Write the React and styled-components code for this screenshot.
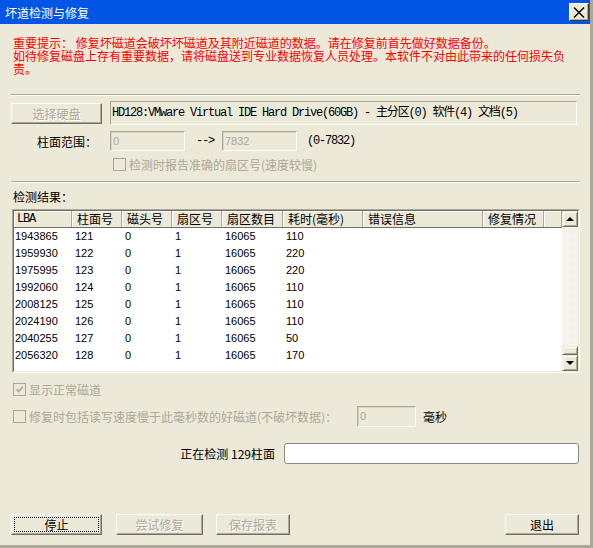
import React from 'react'
import styled, { createGlobalStyle, css } from 'styled-components'

const GlobalStyle = createGlobalStyle`
    html, body {
        margin: 0;
        padding: 0;
        background: #ECE9D8;
    }
    body {
        font-family: "Noto Sans CJK SC", "Liberation Sans", sans-serif;
        font-size: 12px;
        color: #000;
    }
`;

const COLUMNS = '58px 50px 50px 50px 61px 80px 120px 61px 1fr';

const headers = ['LBA', '柱面号', '磁头号', '扇区号', '扇区数目', '耗时(毫秒)', '错误信息', '修复情况', '']

const rows = [
    ['1943865', '121', '0', '1', '16065', '110'],
    ['1959930', '122', '0', '1', '16065', '220'],
    ['1975995', '123', '0', '1', '16065', '220'],
    ['1992060', '124', '0', '1', '16065', '110'],
    ['2008125', '125', '0', '1', '16065', '110'],
    ['2024190', '126', '0', '1', '16065', '110'],
    ['2040255', '127', '0', '1', '16065', '50'],
    ['2056320', '128', '0', '1', '16065', '170'],
]

function App() {
    return (
        <>
            <GlobalStyle />
            <Window>
                <TitleBar>
                    <span>坏道检测与修复</span>
                    <CloseButton>
                        <svg width="12" height="11" viewBox="0 0 12 11">
                            <path d="M1 0.5 L11 10.5 M11 0.5 L1 10.5" stroke="#000" strokeWidth="1.4" fill="none" />
                        </svg>
                    </CloseButton>
                </TitleBar>
                <Body>
                    <Notice>
                        重要提示： 修复坏磁道会破坏坏磁道及其附近磁道的数据。请在修复前首先做好数据备份。<br />
                        如待修复磁盘上存有重要数据，请将磁盘送到专业数据恢复人员处理。本软件不对由此带来的任何损失负责。
                    </Notice>
                    <Rule $top={19} />

                    <DiskRow>
                        <Button $width={91} disabled>选择硬盘</Button>
                        <DiskField>HD128:VMware Virtual IDE Hard Drive(60GB) - 主分区(0) 软件(4) 文档(5)</DiskField>
                    </DiskRow>

                    <RangeRow>
                        <RangeLabel>柱面范围：</RangeLabel>
                        <Field $width={75}>0</Field>
                        <Arrow>--&gt;</Arrow>
                        <Field $width={75}>7832</Field>
                        <Mono>(0-7832)</Mono>
                    </RangeRow>

                    <CheckRow $indent={102} $top={7}>
                        <CheckBox />
                        <CheckLabel>检测时报告准确的扇区号(速度较慢)</CheckLabel>
                    </CheckRow>
                    <Rule $top={10} />

                    <SectionLabel>检测结果：</SectionLabel>
                    <ListFrame>
                        <ListView>
                            <ListBody>
                                <HeaderRow>
                                    {headers.map((h, i) => <HeaderCell key={i} $first={i === 0}>{h}</HeaderCell>)}
                                </HeaderRow>
                                {rows.map((r) => (
                                    <Row key={r[0]}>
                                        {r.map((c, i) => <Cell key={i} $first={i === 0}>{c}</Cell>)}
                                    </Row>
                                ))}
                            </ListBody>
                            <Scrollbar>
                                <ScrollButton><Triangle /></ScrollButton>
                                <Track />
                                <Thumb />
                                <ScrollButton><Triangle $down /></ScrollButton>
                            </Scrollbar>
                        </ListView>
                    </ListFrame>

                    <CheckRow $indent={2} $top={10}>
                        <CheckBox>
                            <svg width="9" height="9" viewBox="0 0 9 9">
                                <path d="M1.5 4.2 L3.6 6.5 L7.8 1.8" stroke="#ACA899" strokeWidth="1.6" fill="none" />
                            </svg>
                        </CheckBox>
                        <CheckLabel>显示正常磁道</CheckLabel>
                    </CheckRow>

                    <SlowRow>
                        <CheckBox />
                        <CheckLabel $width={325}>修复时包括读写速度慢于此毫秒数的好磁道(不破坏数据)：</CheckLabel>
                        <Field $width={59} $height={21}>0</Field>
                        <Unit>毫秒</Unit>
                    </SlowRow>

                    <ProgressRow>
                        <span>正在检测 129柱面</span>
                        <ProgressField />
                    </ProgressRow>

                    <ButtonRow>
                        <Button $width={91} $focused>停止</Button>
                        <Button $width={87} disabled>尝试修复</Button>
                        <Button $width={74} disabled>保存报表</Button>
                        <Button $width={74} $push>退出</Button>
                    </ButtonRow>
                </Body>
            </Window>
        </>
    )
}

const Window = styled.div`
    width: 593px;
    height: 548px;
    box-sizing: border-box;
    display: flex;
    flex-direction: column;
    background: #ECE9D8;
    border-right: 3px solid #ACA899;
    border-bottom: 3px solid #ACA899;
    overflow: hidden;
`;

const TitleBar = styled.div`
    height: 24px;
    flex-shrink: 0;
    display: flex;
    align-items: center;
    justify-content: space-between;
    padding: 0 1px 0 5px;
    background: #0055E5;
    color: #fff;
    font-size: 12px;
`;

const CloseButton = styled.div`
    width: 20px;
    height: 18px;
    box-sizing: border-box;
    display: flex;
    align-items: center;
    justify-content: center;
    background: #ECE9D8;
    border: 1px solid;
    border-color: #fff #404040 #404040 #fff;
    box-shadow: inset -1px -1px #ACA899;
`;

const Body = styled.div`
    flex: 1;
    display: flex;
    flex-direction: column;
    padding: 0 10px 10px 11px;
`;

const Notice = styled.div`
    margin-top: 12px;
    padding-left: 2px;
    width: 558px;
    color: #f00;
    line-height: 13px;
`;

const Rule = styled.div`
    margin-top: ${p => p.$top}px;
    border-top: 1px solid #ACA899;
    border-bottom: 1px solid #fff;
`;

const raised = css`
    border: 1px solid;
    border-color: #fff #716F64 #716F64 #fff;
    box-shadow: inset -1px -1px #ACA899;
`;

const Button = styled.button`
    width: ${p => p.$width}px;
    height: 21px;
    padding: 0;
    box-sizing: border-box;
    background: #ECE9D8;
    ${raised}
    font-family: inherit;
    font-size: 12px;
    color: #000;
    ${p => p.$focused && css`
        outline: 1px dotted #000;
        outline-offset: -4px;
    `}
    ${p => p.$push && css`
        margin-left: auto;
        margin-right: 1px;
    `}
    &:disabled {
        color: #ACA899;
        text-shadow: 1px 1px 0 #fff;
    }
`;

const DiskRow = styled.div`
    display: flex;
    align-items: center;
    gap: 8px;
    height: 24px;
    margin-top: 5px;
    padding-right: 3px;
`;

const DiskField = styled.div`
    flex: 1;
    height: 24px;
    box-sizing: border-box;
    padding-left: 1px;
    border: 1px solid;
    border-color: #ACA899 #fff #fff #ACA899;
    font-family: "Liberation Mono", "Noto Sans CJK SC", monospace;
    letter-spacing: -1.2px;
    line-height: 22px;
    white-space: nowrap;
`;

const RangeRow = styled.div`
    display: flex;
    align-items: center;
    height: 20px;
    margin-top: 6px;
`;

const RangeLabel = styled.div`
    width: 99px;
    box-sizing: border-box;
    padding-left: 26px;
`;

const Field = styled.div`
    width: ${p => p.$width}px;
    height: ${p => p.$height || 20}px;
    box-sizing: border-box;
    padding-left: 2px;
    border: 1px solid;
    border-color: #ACA899 #fff #fff #ACA899;
    box-shadow: inset 1px 1px #D8D4C4;
    color: #ACA899;
    font-family: "Liberation Sans", sans-serif;
    font-size: 11px;
    line-height: ${p => (p.$height || 20) - 2}px;
`;

const Mono = styled.span`
    margin-left: 10px;
    font-family: "Liberation Mono", monospace;
    letter-spacing: -1.2px;
`;

const Arrow = styled(Mono)`
    width: 37px;
    box-sizing: border-box;
    margin-left: 0;
    padding-left: 11px;
`;

const CheckRow = styled.div`
    display: flex;
    align-items: center;
    gap: 3px;
    height: 13px;
    margin-top: ${p => p.$top}px;
    padding-left: ${p => p.$indent}px;
`;

const CheckBox = styled.div`
    width: 13px;
    height: 13px;
    flex-shrink: 0;
    box-sizing: border-box;
    display: flex;
    align-items: center;
    justify-content: center;
    border: 1px solid #ACA899;
    background: #ECE9D8;
`;

const CheckLabel = styled.span`
    color: #ACA899;
    white-space: nowrap;
    ${p => p.$width && css`width: ${p.$width}px;`}
`;

const SectionLabel = styled.div`
    margin-top: 7px;
    padding-left: 2px;
    line-height: 14px;
`;

const ListFrame = styled.div`
    margin: 5px 0 0 1px;
    height: 164px;
    box-sizing: border-box;
    border: 1px solid;
    border-color: #ACA899 #fff #fff #ACA899;
`;

const ListView = styled.div`
    height: 100%;
    box-sizing: border-box;
    display: flex;
    border: 1px solid;
    border-color: #716F64 #ECE9D8 #ECE9D8 #716F64;
    background: #fff;
`;

const ListBody = styled.div`
    flex: 1;
    display: flex;
    flex-direction: column;
`;

const HeaderRow = styled.div`
    display: grid;
    grid-template-columns: ${COLUMNS};
    height: 17px;
    box-sizing: border-box;
    background: #ECE9D8;
    border-bottom: 1px solid #716F64;
`;

const HeaderCell = styled.div`
    padding-left: ${p => p.$first ? 3 : 5}px;
    border-right: 1px solid #ACA899;
    box-shadow: inset 1px 1px #fff;
    line-height: 16px;
    white-space: nowrap;
    overflow: hidden;
    ${p => p.$first && css`
        font-family: "Liberation Mono", monospace;
        letter-spacing: -1.2px;
    `}
`;

const Row = styled.div`
    display: grid;
    grid-template-columns: ${COLUMNS};
    height: 17px;
    line-height: 17px;
    font-family: "Liberation Sans", sans-serif;
    font-size: 11px;
`;

const Cell = styled.div`
    padding-left: ${p => p.$first ? 1 : 3}px;
`;

const Scrollbar = styled.div`
    width: 16px;
    display: flex;
    flex-direction: column;
    background-color: #ECE9D8;
    background-image: conic-gradient(#fff 25%, #ECE9D8 0 50%, #fff 0 75%, #ECE9D8 0);
    background-size: 2px 2px;
`;

const ScrollButton = styled.div`
    height: 16px;
    box-sizing: border-box;
    display: flex;
    align-items: center;
    justify-content: center;
    background: #ECE9D8;
    border: 1px solid;
    border-color: #ECE9D8 #716F64 #716F64 #ECE9D8;
    box-shadow: inset 1px 1px #fff, inset -1px -1px #ACA899;
`;

const Thumb = styled(ScrollButton)`
    height: 9px;
`;

const Track = styled.div`
    flex: 1;
`;

const Triangle = styled.div`
    width: 0;
    height: 0;
    border-left: 4px solid transparent;
    border-right: 4px solid transparent;
    ${p => p.$down
        ? css`border-top: 4px solid #000;`
        : css`border-bottom: 4px solid #000;`}
`;

const SlowRow = styled.div`
    display: flex;
    align-items: center;
    gap: 3px;
    height: 21px;
    margin-top: 10px;
    padding-left: 2px;
`;

const Unit = styled.span`
    margin-left: 4px;
`;

const ProgressRow = styled.div`
    display: flex;
    align-items: center;
    justify-content: flex-end;
    gap: 9px;
    height: 21px;
    margin-top: 16px;
    padding-right: 1px;
`;

const ProgressField = styled.div`
    width: 295px;
    height: 21px;
    box-sizing: border-box;
    border: 1px solid #8A8A8A;
    border-radius: 3px;
    background: #fff;
`;

const ButtonRow = styled.div`
    display: flex;
    align-items: center;
    margin-top: auto;
    height: 21px;
    & > button + button {
        margin-left: 13px;
    }
    & > button:nth-child(2) {
        margin-left: 14px;
    }
    & > button:last-child {
        margin-left: auto;
    }
`;

export default App
